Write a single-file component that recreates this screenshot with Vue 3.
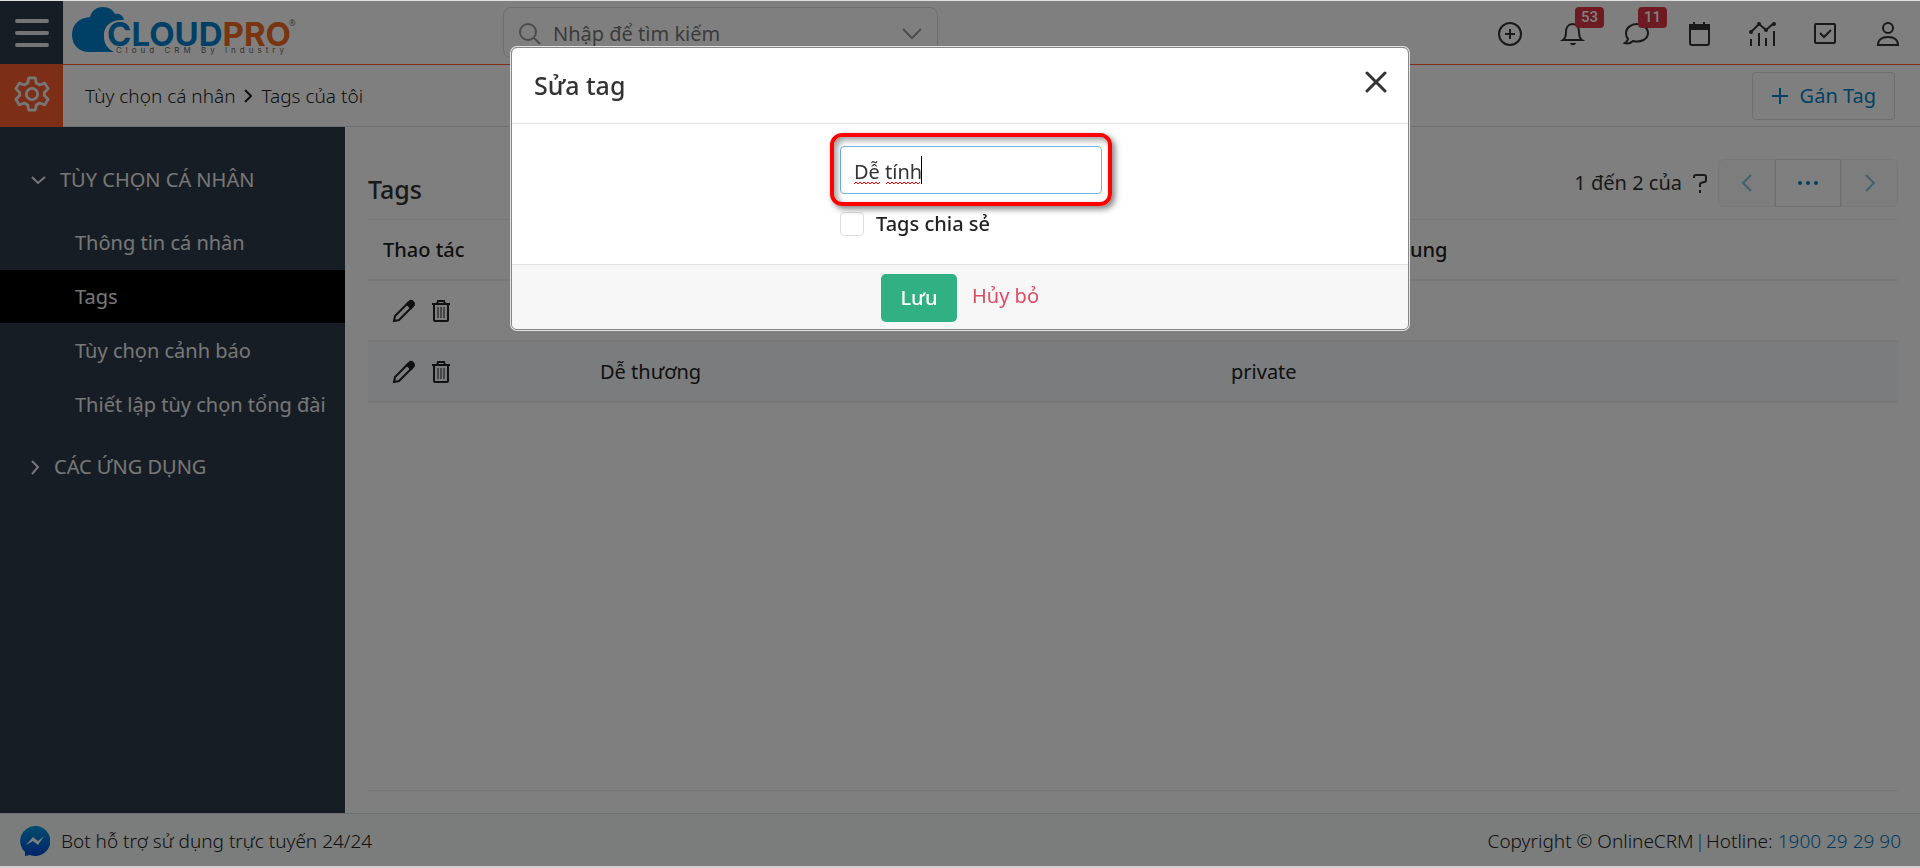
<template>
  <div class="app">
    <header class="topbar">
      <button class="menu-btn" type="button" aria-label="Menu">
        <svg width="36" height="30" viewBox="0 0 36 30">
          <path d="M3 3h30M3 15h30M3 27h30" />
        </svg>
      </button>
      <a class="logo" href="#" aria-label="CloudPro">
        <svg width="230" height="54" viewBox="0 0 230 54">
          <path
            class="logo-cloud"
            d="M43 46H18C8 46 1 39 1 29c0-10 6-17 18-18C21 4 26 1 32 1c6 0 10 3 12 7 4-1 8 1 9 6C40 13 32 20 33 31c0 7 4 12 10 15z"
          />
          <text class="logo-name" x="36" y="40">
            <tspan class="logo-blue">CLOUD</tspan><tspan class="logo-orange">PRO</tspan>
          </text>
          <text class="logo-reg" x="218" y="20">®</text>
          <text class="logo-sub" x="45" y="47">Cloud CRM By Industry</text>
        </svg>
      </a>
      <div class="search">
        <svg class="search-icon" width="24" height="24" viewBox="0 0 24 24">
          <circle cx="10" cy="10" r="8" />
          <path d="M16 16l6 6" />
        </svg>
        <input type="search" aria-label="Tìm kiếm" placeholder="Nhập để tìm kiếm" />
        <svg class="search-icon" width="20" height="12" viewBox="0 0 20 12">
          <path d="M1 1l9 9l9-9" />
        </svg>
      </div>
      <nav class="tools">
        <button type="button" aria-label="Thêm nhanh">
          <svg viewBox="0 0 28 28">
            <circle cx="14" cy="14" r="11" />
            <path d="M14 9v10M9 14h10" />
          </svg>
        </button>
        <button type="button" aria-label="Thông báo">
          <svg viewBox="0 0 28 28">
            <path d="M4 20h19c-3-2-3-5-3-8 0-4-2-8-6.500-8S7 8 7 12c0 3 0 6-3 8z" />
            <path class="solid dot" d="M11 23h6c-1 3-5 3-6 0z" />
          </svg>
          <span class="badge">53</span>
        </button>
        <button type="button" aria-label="Tin nhắn">
          <svg viewBox="0 0 28 28">
            <path d="M3 23c3 1 6 0 8-2 8 2 15-2 15-8 0-5-5-9-11-9S4 8 4 13c0 3 1 5 2 6-1 2-1 3-3 4z" />
          </svg>
          <span class="badge">11</span>
        </button>
        <button type="button" aria-label="Lịch">
          <svg viewBox="0 0 28 28">
            <rect x="5" y="5" width="19" height="20" rx="2" />
            <path class="solid" d="M5 5h19v4H5z" />
            <path d="M9 2v3M19 2v3" />
          </svg>
        </button>
        <button type="button" aria-label="Báo cáo">
          <svg viewBox="0 0 28 28">
            <path d="M3 26v-7M11 26V13M18 26v-8M26 26V11M3 12l8-8l7 6l8-7" />
            <circle class="solid dot" cx="3" cy="12" r="2" />
            <circle class="solid dot" cx="11" cy="4" r="2" />
            <circle class="solid dot" cx="18" cy="10" r="2" />
            <circle class="solid dot" cx="26" cy="4" r="2" />
          </svg>
        </button>
        <button type="button" aria-label="Công việc">
          <svg viewBox="0 0 28 28">
            <rect x="4" y="4" width="20" height="19" rx="1" />
            <path d="M9 13l4 4l7-7" />
          </svg>
        </button>
        <button type="button" aria-label="Tài khoản">
          <svg viewBox="0 0 28 28">
            <circle cx="14" cy="8" r="5" />
            <path d="M4 25c0-5 4-8 10-8s10 3 10 8z" />
          </svg>
        </button>
      </nav>
    </header>

    <div class="subbar">
      <a class="settings" href="#" aria-label="Cài đặt">
        <svg width="36" height="36" viewBox="0 0 38 38">
          <path
            d="M15.500 2h7l1 5.500 3.500 2 5.500-2 3.500 6-4 4v3l4 4-3.500 6-5.500-2-3.500 2-1 5.500h-7l-1-5.500-3.500-2-5.500 2-3.500-6 4-4v-3l-4-4 3.500-6 5.500 2 3.500-2z"
          />
          <circle cx="19" cy="19" r="6" />
        </svg>
      </a>
      <nav class="breadcrumb">
        <a href="#">Tùy chọn cá nhân</a>
        <svg width="8" height="14" viewBox="0 0 8 14"><path d="M1 1l6 6l-6 6" /></svg>
        <a href="#">Tags của tôi</a>
      </nav>
      <button class="assign-btn" type="button">
        <svg width="18" height="18" viewBox="0 0 18 18"><path d="M9 1v16M1 9h16" /></svg>
        Gán Tag
      </button>
    </div>

    <div class="content">
      <aside class="sidebar">
        <button class="group open" type="button">
          <svg width="15" height="9" viewBox="0 0 15 9"><path d="M1 1l6 6l7-6" /></svg>
          TÙY CHỌN CÁ NHÂN
        </button>
        <ul class="items">
          <li v-for="item in menuItems" :key="item">
            <a href="#" :class="{ active: item === activeItem }">{{ item }}</a>
          </li>
        </ul>
        <button class="group" type="button">
          <svg width="9" height="15" viewBox="0 0 9 15"><path d="M1 1l6 6l-6 7" /></svg>
          CÁC ỨNG DỤNG
        </button>
      </aside>

      <main class="main">
        <div class="list-head">
          <h1>Tags</h1>
          <div class="paging">
            <span>1 đến 2 của</span>
            <svg class="unknown" width="16" height="20" viewBox="0 0 16 20">
              <path d="M2 5V4c0-1 1-2 2-2h8c1 0 2 1 2 2v3c0 1-1 2-2 2l-3 1c-1 0-1 1-1 2v2M8 17v3" />
            </svg>
            <div class="pager">
              <button type="button" disabled aria-label="Trang trước">
                <svg width="12" height="20" viewBox="0 0 12 20"><path d="M10 2l-8 8l8 8" /></svg>
              </button>
              <button class="pages" type="button" aria-label="Chọn trang">
                <svg width="22" height="6" viewBox="0 0 22 6">
                  <circle cx="3" cy="3" r="2" />
                  <circle cx="11" cy="3" r="2" />
                  <circle cx="19" cy="3" r="2" />
                </svg>
              </button>
              <button type="button" disabled aria-label="Trang sau">
                <svg width="12" height="20" viewBox="0 0 12 20"><path d="M2 2l8 8l-8 8" /></svg>
              </button>
            </div>
          </div>
        </div>

        <table class="tags">
          <colgroup>
            <col class="col-actions" />
            <col class="col-name" />
            <col />
          </colgroup>
          <thead>
            <tr>
              <th>Thao tác</th>
              <th>Tags</th>
              <th>Riêng tư / Dùng chung</th>
            </tr>
          </thead>
          <tbody>
            <tr v-for="tag in tags" :key="tag.name">
              <td>
                <div class="row-actions">
                  <button type="button" aria-label="Sửa">
                    <svg width="24" height="24" viewBox="0 0 24 24">
                      <path d="M2 22l1-5L16 4l4 4L7 21z" />
                      <path class="solid" d="M15 5l3-3c2-1 5 2 4 4l-3 3z" />
                    </svg>
                  </button>
                  <button type="button" aria-label="Xóa">
                    <svg width="20" height="24" viewBox="0 0 20 24">
                      <path d="M1 5h18M6 5l1-3h6l1 3M3 5v16c0 1 1 1 1 1h12s1 0 1-1V5" />
                      <path class="thin" d="M7 8v11M10 8v11M13 8v11" />
                    </svg>
                  </button>
                </div>
              </td>
              <td>{{ tag.name }}</td>
              <td>{{ tag.visibility }}</td>
            </tr>
          </tbody>
        </table>
      </main>
    </div>

    <footer class="footer">
      <a class="bot" href="#">
        <svg width="30" height="30" viewBox="0 0 30 30">
          <defs>
            <linearGradient id="bot-fill" x1="0" y1="0" x2="0" y2="1">
              <stop offset="0" stop-color="#009ad8" />
              <stop offset="1" stop-color="#0048d8" />
            </linearGradient>
          </defs>
          <path fill="url(#bot-fill)" d="M15 0a15 15 0 1 1-5 29l-5 1v-4A15 15 0 0 1 15 0z" />
          <path fill="#fff" d="M6 19l7-8 5 4 6-5-6 9-5-4z" />
        </svg>
        Bot hỗ trợ sử dụng trực tuyến 24/24
      </a>
      <p class="copyright">
        Copyright © OnlineCRM<span class="bar">|</span>Hotline: <a href="tel:1900292990">1900 29 29 90</a>
      </p>
    </footer>

    <div v-if="showModal" class="overlay">
      <form class="modal" role="dialog" aria-labelledby="modal-title" @submit.prevent="save">
        <div class="modal-header">
          <h2 id="modal-title">Sửa tag</h2>
          <button class="close" type="button" aria-label="Đóng" @click="close">
            <svg width="22" height="22" viewBox="0 0 22 22"><path d="M2 2l18 18M20 2L2 20" /></svg>
          </button>
        </div>
        <div class="modal-body">
          <div class="fields">
            <div class="name-field">
              <input v-model="form.name" type="text" aria-label="Tên tag" />
              <svg class="spell" width="70" height="30" viewBox="0 0 70 30">
                <path class="wave" :d="wave(0, 26)" />
                <path class="wave" :d="wave(32, 66)" />
                <path class="caret" d="M67.500 0v28" />
              </svg>
              <span class="marker"></span>
            </div>
            <label class="shared">
              <input v-model="form.shared" type="checkbox" />
              Tags chia sẻ
            </label>
          </div>
        </div>
        <div class="modal-footer">
          <button class="save-btn" type="submit">Lưu</button>
          <button class="cancel-btn" type="button" @click="close">Hủy bỏ</button>
        </div>
      </form>
    </div>
  </div>
</template>

<script setup>
import { reactive, ref } from 'vue';

const menuItems = [
  'Thông tin cá nhân',
  'Tags',
  'Tùy chọn cảnh báo',
  'Thiết lập tùy chọn tổng đài',
];
const activeItem = ref('Tags');

const tags = ref([
  { name: 'Dễ tính', visibility: 'private' },
  { name: 'Dễ thương', visibility: 'private' },
]);

const showModal = ref(true);
const form = reactive({
  name: 'Dễ tính',
  shared: false,
});

// zigzag under a misspelled word
function wave(from, to) {
  let d = `M${from} 28`;
  for (let x = from + 2, up = true; x <= to; x += 2, up = !up) {
    d += `L${x} ${up ? 26 : 28}`;
  }
  return d;
}

function save() {
  tags.value[0].name = form.name;
  tags.value[0].visibility = form.shared ? 'public' : 'private';
  close();
}

function close() {
  showModal.value = false;
}
</script>

<style>
body {
  background: #fff;
}
</style>

<style scoped>
.app {
  display: flex;
  flex-direction: column;
  min-height: 100vh;
  box-sizing: border-box;
  border-top: 1px solid #dde0df;
  border-bottom: 2px solid #d2d0d0;
  font-family: "Noto Sans", "Open Sans", sans-serif;
  font-size: 20px;
  line-height: 28px;
  color: #333;
}

.app * {
  box-sizing: border-box;
}

button,
input {
  font: inherit;
  color: inherit;
}

button {
  padding: 0;
  border: 0;
  background: none;
  cursor: pointer;
}

a {
  color: inherit;
  text-decoration: none;
}

svg {
  flex: none;
  fill: none;
  stroke: currentColor;
  stroke-width: 2;
}

svg text {
  stroke: none;
}

.solid {
  fill: currentColor;
}

/* top bar */
.topbar {
  display: flex;
  align-items: center;
  height: 64px;
  border-bottom: 1px solid #f85c2c;
}

.menu-btn {
  display: flex;
  justify-content: center;
  align-items: center;
  width: 63px;
  height: 63px;
  background: #2c3b49;
  color: #e8e8ea;
}

.menu-btn svg {
  stroke-width: 4;
  stroke-linecap: round;
  overflow: visible;
}

.logo {
  flex: 1 1 0;
  max-width: 432px;
  padding-left: 8px;
  height: 54px;
}

.logo svg {
  display: block;
}

.logo-cloud {
  fill: #0080cc;
  stroke: none;
}

.logo-name {
  font-family: Inter, sans-serif;
  font-size: 33px;
  font-weight: 700;
}

.logo-blue {
  fill: #0080cc;
}

.logo-orange {
  fill: #f26a24;
}

.logo-reg {
  font-size: 8px;
  fill: #777;
}

.logo-sub {
  font-family: Inter, sans-serif;
  font-size: 8px;
  letter-spacing: 4px;
  fill: #666;
}

.search {
  display: flex;
  align-items: center;
  gap: 11px;
  width: 435px;
  height: 51px;
  margin-left: 8px;
  padding: 2px 15px 0 14px;
  border: 1px solid #ddd;
  border-radius: 8px;
}

.search-icon {
  color: #999;
}

.search input {
  flex: 1;
  min-width: 0;
  padding: 0;
  border: 0;
  outline: 0;
  background: none;
}

.search input::placeholder {
  color: #777;
  opacity: 1;
}

.tools {
  display: flex;
  margin-left: auto;
  padding: 2px 1px 0 0;
}

.tools button {
  position: relative;
  display: flex;
  justify-content: center;
  align-items: center;
  width: 63px;
  height: 63px;
}

.tools svg {
  width: 28px;
  height: 28px;
}

.tools .dot {
  stroke: none;
}

.badge {
  position: absolute;
  top: 5px;
  left: 34px;
  min-width: 29px;
  height: 21px;
  border-radius: 4px;
  background: #dc3545;
  color: #fff;
  font-family: Roboto, sans-serif;
  font-size: 15px;
  font-weight: 500;
  line-height: 20px;
}

/* breadcrumb bar */
.subbar {
  display: flex;
  align-items: center;
  height: 62px;
  padding-right: 25px;
  border-bottom: 1px solid #ddd;
}

.settings {
  display: flex;
  justify-content: center;
  align-items: center;
  align-self: flex-start;
  flex: none;
  width: 63px;
  height: 62px;
  padding-bottom: 4px;
  background: #f85c2c;
  color: #eee;
}

.settings svg {
  stroke-width: 3;
  stroke-linejoin: round;
}

.breadcrumb {
  display: flex;
  align-items: center;
  gap: 9px;
  padding-left: 22px;
  color: #222;
  font-size: 19px;
  font-weight: 300;
}

.assign-btn {
  display: flex;
  align-items: center;
  gap: 11px;
  height: 48px;
  margin-left: auto;
  padding: 0 18px;
  border: 1px solid #ddd;
  border-radius: 4px;
  color: #0085c8;
}

/* body */
.content {
  display: flex;
  flex: 1;
}

.sidebar {
  flex: none;
  width: 345px;
  padding-top: 26px;
  background: #2c3b49;
  color: #eee;
}

.group {
  display: flex;
  align-items: center;
  gap: 14px;
  width: 100%;
  height: 54px;
  padding-left: 31px;
}

.items {
  margin: 9px 0;
  padding: 0;
  list-style: none;
}

.items li {
  margin-bottom: 1px;
}

.items a {
  display: block;
  padding: 1px 0 0 75px;
  line-height: 52px;
}

.items .active {
  background: #000;
}

.main {
  display: flex;
  flex: 1;
  flex-direction: column;
  min-width: 0;
  margin: 0 22px 22px 23px;
  border-bottom: 1px solid #eee;
}

.list-head {
  display: flex;
  justify-content: space-between;
  align-items: center;
  height: 92px;
  padding-top: 20px;
}

h1,
h2 {
  margin: 0;
  font-size: 25px;
  font-weight: 500;
  line-height: 32px;
}

h1 {
  padding-top: 12px;
}

.paging {
  display: flex;
  align-items: center;
  gap: 10px;
}

.pager {
  display: flex;
}

.pager button {
  display: flex;
  justify-content: center;
  align-items: center;
  width: 57px;
  height: 48px;
  border: 1px solid #f0f0f0;
  color: #0085c8;
}

.pager button:disabled {
  background: #fafafa;
  color: #85c0e0;
}

.pager button:first-child {
  border-radius: 6px 0 0 6px;
}

.pager button:last-child {
  border-radius: 0 6px 6px 0;
}

.pager .pages {
  width: 66px;
  border-color: #ddd;
}

.pages svg {
  fill: currentColor;
  stroke: none;
}

.tags {
  width: 100%;
  border-collapse: collapse;
  table-layout: fixed;
  color: #222;
}

.col-actions {
  width: 217px;
}

.col-name {
  width: 631px;
}

th,
td {
  height: 61px;
  padding: 2px 15px 0;
  text-align: left;
}

th {
  height: 60px;
  border-top: 1px solid #f0f0f0;
  border-bottom: 2px solid #f0f0f0;
  font-weight: 500;
}

td {
  border-bottom: 2px solid #f0f0f0;
}

tbody tr:nth-child(even) {
  background: #f6f8fa;
}

.row-actions {
  display: flex;
  gap: 15px;
  padding-left: 9px;
}

.row-actions button {
  display: flex;
}

.thin {
  stroke-width: 1;
}

/* page footer */
.footer {
  display: flex;
  justify-content: space-between;
  align-items: center;
  height: 53px;
  padding: 2px 19px 0 20px;
  border-top: 1px solid #dce0df;
  background: #f7faf8;
  color: #222;
  font-size: 19px;
  font-weight: 300;
}

.bot {
  display: flex;
  align-items: center;
  gap: 11px;
}

.bot svg {
  stroke: none;
}

.copyright {
  margin: 0;
}

.copyright .bar {
  padding: 0 1px;
}

.copyright .bar,
.copyright a {
  color: #0078be;
}

/* dialog */
.overlay {
  position: fixed;
  inset: 1px 0 2px;
  padding-top: 46px;
  background: rgba(0, 0, 0, 0.5);
}

.modal {
  max-width: 898px;
  margin: 0 auto;
  border: 1px solid #858585;
  border-radius: 6px;
  background: #fff;
  background-clip: padding-box;
  box-shadow: 0 0 0 1px #e2e2e2;
  overflow: hidden;
}

.modal-header {
  display: flex;
  justify-content: space-between;
  padding: 21px 21px 22px 22px;
  border-bottom: 1px solid #e2e2e2;
}

.close {
  align-self: flex-start;
  display: flex;
  padding-top: 2px;
}

.close svg {
  stroke-width: 3;
  stroke-linecap: round;
}

.modal-body {
  display: flex;
  justify-content: center;
  padding: 22px 22px 26px;
}

.fields {
  display: flex;
  flex-direction: column;
  gap: 16px;
  width: 262px;
  margin-left: 22px;
}

.name-field {
  position: relative;
}

.name-field input {
  display: block;
  width: 100%;
  height: 48px;
  padding: 2px 13px 0;
  border: 1px solid #71b5e0;
  border-radius: 4px;
  outline: 0;
}

.spell {
  position: absolute;
  top: 10px;
  left: 14px;
  stroke-width: 1;
  pointer-events: none;
}

.wave {
  stroke: #f00;
}

.caret {
  stroke: #000;
}

.marker {
  position: absolute;
  inset: -13px -10px -12px;
  border: 4px solid #f00;
  border-radius: 12px;
  box-shadow: 3px 3px 6px rgba(0, 0, 0, 0.5), inset 3px 3px 6px rgba(0, 0, 0, 0.4);
  pointer-events: none;
}

.shared {
  display: flex;
  align-items: center;
  gap: 12px;
  color: #222;
  font-weight: 500;
}

.shared input {
  width: 24px;
  height: 24px;
  margin: 0;
  border: 1px solid #ddd;
  border-radius: 4px;
  background: #fff;
  appearance: none;
}

.shared input:checked {
  background: #0085c8;
}

.modal-footer {
  display: flex;
  justify-content: center;
  gap: 15px;
  padding: 9px 8px 7px;
  border-top: 1px solid #e2e2e2;
  background: #f7f7f7;
}

.save-btn {
  width: 76px;
  height: 48px;
  border-radius: 5px;
  background: #31b083;
  color: #fff;
  font-weight: 500;
}

.cancel-btn {
  align-self: flex-start;
  line-height: 44px;
  color: #e04a65;
}
</style>
